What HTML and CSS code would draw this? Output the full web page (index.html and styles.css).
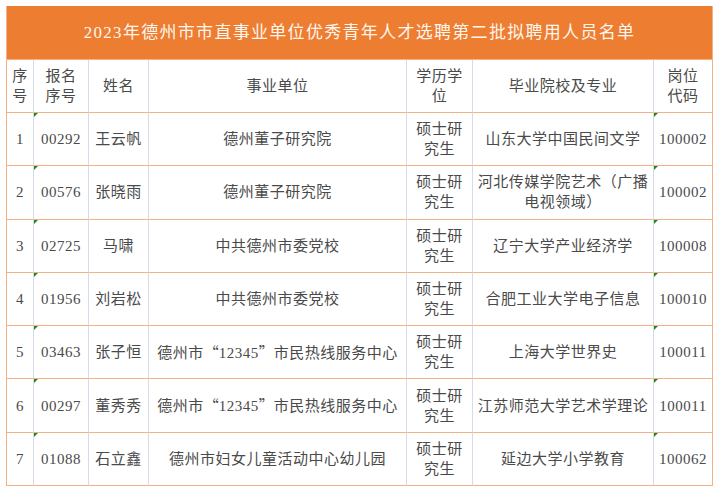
FILE: index.html
```html
<!DOCTYPE html>
<html lang="zh-CN">
<head>
<meta charset="utf-8">
<title>2023年德州市市直事业单位优秀青年人才选聘第二批拟聘用人员名单</title>
<link rel="stylesheet" href="styles.css">
</head>
<body>
<div class="wrap">
<table class="sheet">
<colgroup>
<col class="c1"><col class="c2"><col class="c3"><col class="c4"><col class="c5"><col class="c6"><col class="c7">
</colgroup>
<thead>
<tr class="title-row"><th colspan="7" class="title">2023年德州市市直事业单位优秀青年人才选聘第二批拟聘用人员名单</th></tr>
<tr class="head-row">
<th>序<br>号</th><th>报名<br>序号</th><th>姓名</th><th>事业单位</th><th>学历学<br>位</th><th>毕业院校及专业</th><th>岗位<br>代码</th>
</tr>
</thead>
<tbody>
<tr><td>1</td><td class="txt">00292</td><td>王云帆</td><td>德州董子研究院</td><td>硕士研<br>究生</td><td>山东大学中国民间文学</td><td class="txt">100002</td></tr>
<tr><td>2</td><td class="txt">00576</td><td>张晓雨</td><td>德州董子研究院</td><td>硕士研<br>究生</td><td>河北传媒学院艺术（广播<br>电视领域）</td><td class="txt">100002</td></tr>
<tr><td>3</td><td class="txt">02725</td><td>马啸</td><td>中共德州市委党校</td><td>硕士研<br>究生</td><td>辽宁大学产业经济学</td><td class="txt">100008</td></tr>
<tr><td>4</td><td class="txt">01956</td><td>刘岩松</td><td>中共德州市委党校</td><td>硕士研<br>究生</td><td>合肥工业大学电子信息</td><td class="txt">100010</td></tr>
<tr><td>5</td><td class="txt">03463</td><td>张子恒</td><td>德州市<span class="q">“</span>12345<span class="q">”</span>市民热线服务中心</td><td>硕士研<br>究生</td><td>上海大学世界史</td><td class="txt">100011</td></tr>
<tr><td>6</td><td class="txt">00297</td><td>董秀秀</td><td>德州市<span class="q">“</span>12345<span class="q">”</span>市民热线服务中心</td><td>硕士研<br>究生</td><td>江苏师范大学艺术学理论</td><td class="txt">100011</td></tr>
<tr><td>7</td><td class="txt">01088</td><td>石立鑫</td><td>德州市妇女儿童活动中心幼儿园</td><td>硕士研<br>究生</td><td>延边大学小学教育</td><td class="txt">100062</td></tr>
</tbody>
</table>
</div>
</body>
</html>
```
FILE: styles.css
```css
html, body {
  margin: 0;
  padding: 0;
  background: #ffffff;
}
.wrap {
  padding: 6px 0 0 6px;
}
.sheet {
  border-collapse: separate;
  border-spacing: 0;
  table-layout: fixed;
  width: 707px;
  font-family: "Liberation Serif", "Noto Sans CJK SC", serif;
  font-size: 15px;
  letter-spacing: 0.5px;
  color: #4a4a4a;
}
.c1 { width: 27px; }
.c2 { width: 55px; }
.c3 { width: 60px; }
.c4 { width: 258px; }
.c5 { width: 66px; }
.c6 { width: 181px; }
.c7 { width: 60px; }

.sheet th, .sheet td {
  padding: 0;
  text-align: center;
  vertical-align: middle;
  font-weight: normal;
  line-height: 20px;
  white-space: nowrap;
  border-bottom: 1px solid #f4b183;
  border-left: 1px solid #d6dbea;
  position: relative;
}
.sheet tr > :first-child {
  border-left: 1px solid #f4b183;
}
.sheet tr > :last-child {
  border-right: 1px solid #f4b183;
}
.title-row .title {
  background: #ed7d31;
  color: #fff6ee;
  height: 53px;
  font-size: 17px;
  letter-spacing: 1.3px;
  border-left: 1px solid #ed7d31;
  border-right: 1px solid #ed7d31;
  border-bottom: 1px solid #f4b183;
}
.head-row th {
  height: 52px;
}
.sheet tbody td {
  height: 52.3px;
}
.q {
  font-family: "Noto Sans CJK SC", sans-serif;
  display: inline-block;
  width: 15px;
}
.txt::before {
  content: "";
  position: absolute;
  top: 0;
  left: 0;
  width: 0;
  height: 0;
  border-top: 4px solid #1e8a1e;
  border-right: 4px solid transparent;
}
```
